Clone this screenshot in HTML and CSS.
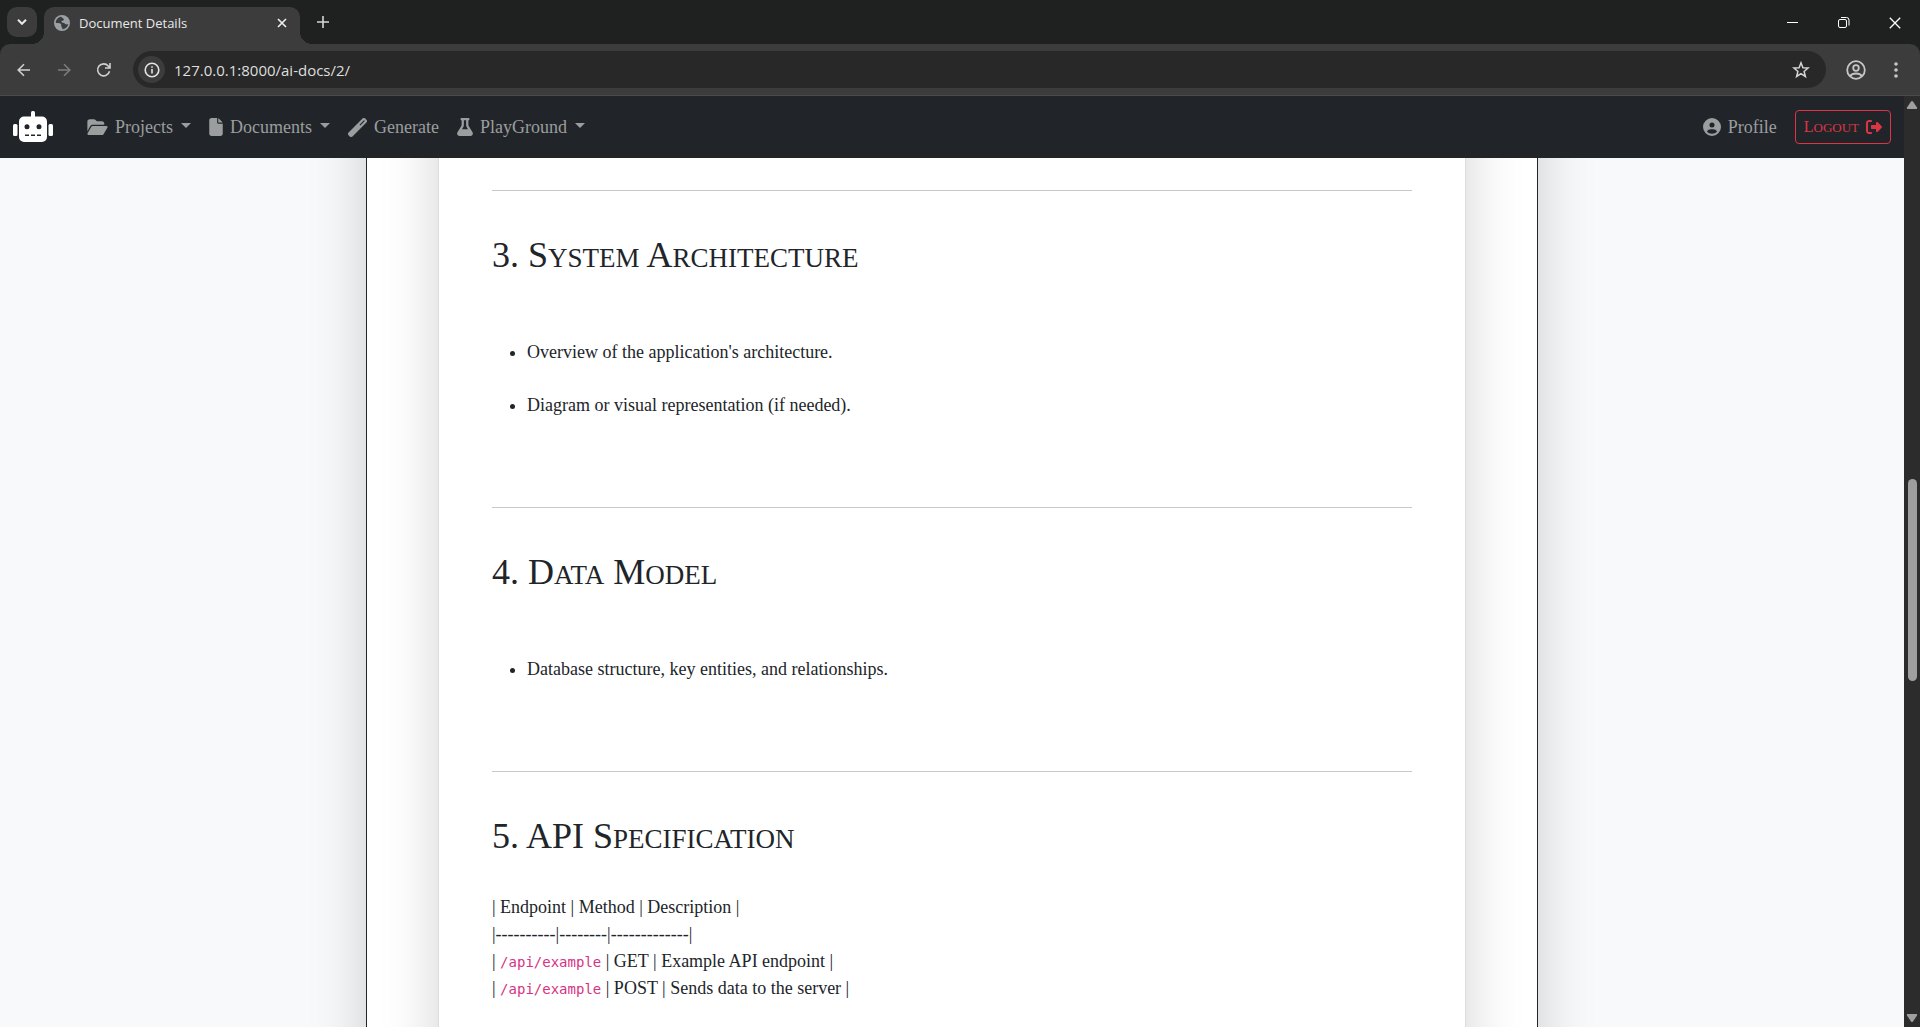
FILE: index.html
```html
<!DOCTYPE html>
<html lang="en">
<head>
<meta charset="utf-8">
<title>Document Details</title>
<link rel="stylesheet" href="styles.css">
</head>
<body>
<header class="browser">
  <div class="tabstrip">
    <button class="tab-search" aria-label="Search tabs"><svg width="10" height="6" viewBox="0 0 10 6" fill="none" stroke="#e8e8e8" stroke-width="2"><path d="M1 .8 5 4.8 9 .8"/></svg></button>
    <div class="tab">
      <svg width="16" height="16" viewBox="0 0 16 16"><circle cx="8" cy="8" r="8" fill="#9aa0a6"/><path d="M7 1.800C3.700 2.300 1.800 5 1.800 8c2 0 3.900-.2 5 .8 1.200 1.100-.3 2.400 1 3.400.8.600.7 1.400.2 2 3.300 0 5.800-2.300 6.200-5.200-1.300.7-2.500.4-3.400-.6-.9-1-2.900-.2-3.300-1.400-.4-1.300 1.500-1 2.400-1.900.7-.8-1-1.600-2.900-3.300z" fill="#3c3c3c"/></svg>
      <span class="tab-title">Document Details</span>
      <button class="plain" aria-label="Close tab"><svg width="10" height="10" viewBox="0 0 10 10" stroke="#f0f0f0" stroke-width="1.600"><path d="M1 1l8 8M9 1 1 9"/></svg></button>
    </div>
    <button class="plain new-tab" aria-label="New tab"><svg width="12" height="12" viewBox="0 0 12 12" stroke="#d5d5d5" stroke-width="1.600"><path d="M6 0v12M0 6h12"/></svg></button>
    <div class="window-controls">
      <button class="plain" aria-label="Minimize"><svg width="12" height="12" viewBox="0 0 12 12" stroke="#fff"><path d="M0 5.500h11"/></svg></button>
      <button class="plain" aria-label="Restore"><svg width="12" height="12" viewBox="0 0 12 12" fill="none" stroke="#fff"><rect x=".5" y="2.500" width="8" height="8" rx="1.500"/><path d="M3 .5h5.500a2.500 2.500 0 0 1 2.500 2.500v5.500"/></svg></button>
      <button class="plain" aria-label="Close"><svg width="12" height="12" viewBox="0 0 12 12" stroke="#fff" stroke-width="1.300"><path d="M.8.800l10.400 10.400M11.200.8.800 11.200"/></svg></button>
    </div>
  </div>
  <div class="toolbar">
    <button class="plain" aria-label="Back"><svg width="16" height="16" viewBox="0 0 16 16" fill="none" stroke="#d0d0d0" stroke-width="1.600"><path d="M14 8H2M8 2.200 2.200 8 8 13.800"/></svg></button>
    <button class="plain" aria-label="Forward"><svg width="16" height="16" viewBox="0 0 16 16" fill="none" stroke="#7c7c7c" stroke-width="1.600"><path d="M2 8h12M8 2.200 13.800 8 8 13.800"/></svg></button>
    <button class="plain" aria-label="Reload"><svg width="16" height="16" viewBox="0 0 16 16" fill="none" stroke="#d0d0d0" stroke-width="1.600"><path d="M13.500 9.300A6 6 0 1 1 12.300 4L14 5.800M14 1v5H9"/></svg></button>
    <div class="omnibox">
      <button class="plain site-info" aria-label="Site information"><svg width="16" height="16" viewBox="0 0 16 16" fill="none" stroke="#e3e3e3" stroke-width="1.600"><circle cx="8" cy="8" r="6.800"/><path d="M8 7v4.500M8 4.200v1.600"/></svg></button>
      <input class="url" type="text" aria-label="Address" value="127.0.0.1:8000/ai-docs/2/">
      <button class="plain" aria-label="Bookmark"><svg width="18" height="18" viewBox="0 0 18 18" fill="none" stroke="#d5d5d5" stroke-width="1.500"><path d="M9 1.800l1.900 4.900 5.200.3-4 3.400 1.300 5.100L9 12.700l-4.400 2.800 1.300-5.100-4-3.400 5.200-.3z"/></svg></button>
    </div>
    <button class="plain" aria-label="Account"><svg width="20" height="20" viewBox="0 0 20 20" fill="none" stroke="#c7c7c7" stroke-width="1.800"><circle cx="10" cy="10" r="8.800"/><circle cx="10" cy="8" r="2.800"/><path d="M4 16.200c2.500-3.600 9.500-3.600 12 0"/></svg></button>
    <button class="plain menu" aria-label="Menu"><svg width="4" height="16" viewBox="0 0 4 16" fill="#c7c7c7"><circle cx="2" cy="2" r="1.800"/><circle cx="2" cy="8" r="1.800"/><circle cx="2" cy="14" r="1.800"/></svg></button>
  </div>
</header>
<div class="viewport">
  <div class="page">
    <nav class="navbar">
      <a class="brand" href="#" aria-label="Home"><svg width="40" height="32" viewBox="0 0 40 32" fill="#fff"><rect y="13" width="4.500" height="12" rx="1.500"/><rect x="35.500" y="13" width="4.500" height="12" rx="1.500"/><rect x="18" width="4" height="9" rx="1.500"/><path fill-rule="evenodd" d="M11 5.500h18a5 5 0 0 1 5 5V26a5 5 0 0 1-5 5H11a5 5 0 0 1-5-5V10.500a5 5 0 0 1 5-5zM14 13.300a2.500 2.500 0 1 0 0 5 2.500 2.500 0 0 0 0-5zm12 0a2.500 2.500 0 1 0 0 5 2.500 2.500 0 0 0 0-5zM12 23.500V25h4v-1.500zm6 0V25h4v-1.500zm6 0V25h4v-1.500z"/></svg></a>
      <a class="nav-link" href="#"><svg width="21" height="18" viewBox="0 0 576 512"><path d="M88.700 223.800L0 375.800V96C0 60.700 28.700 32 64 32H181.500c17 0 33.300 6.700 45.300 18.700l26.500 26.500c12 12 28.300 18.700 45.300 18.700H416c35.300 0 64 28.700 64 64v32H144c-22.800 0-43.800 12.100-55.300 31.800zm27.600 16.100C122.100 230 132.600 224 144 224H544c11.500 0 22 6.100 27.700 16.100s5.700 22.200-.1 32.100l-112 192C453.900 474 443.400 480 432 480H32c-11.500 0-22-6.100-27.700-16.100s-5.700-22.200 .1-32.100l112-192z"/></svg>Projects<span class="caret"></span></a>
      <a class="nav-link" href="#"><svg width="14" height="18" viewBox="0 0 384 512"><path d="M0 64C0 28.700 28.700 0 64 0H224V128c0 17.700 14.300 32 32 32H384V448c0 35.300-28.700 64-64 64H64c-35.300 0-64-28.700-64-64V64zm384 64H256V0L384 128z"/></svg>Documents<span class="caret"></span></a>
      <a class="nav-link" href="#"><svg width="19" height="19" viewBox="0 0 19 19"><path fill-rule="evenodd" d="M14.500.6a2 2 0 0 1 2.800 0l1.100 1.100a2 2 0 0 1 0 2.800L4.500 18.400a2 2 0 0 1-2.800 0L.6 17.300a2 2 0 0 1 0-2.800zM16 2.300 11.500 6.800l.8.800 4.500-4.500z"/></svg>Generate</a>
      <a class="nav-link" href="#"><svg width="16" height="18" viewBox="0 0 448 512"><path d="M288 0H160 128C110.300 0 96 14.300 96 32s14.300 32 32 32V196.800c0 11.800-3.300 23.500-9.500 33.500L10.300 406.200C3.600 417.200 0 429.700 0 442.600C0 480.900 31.100 512 69.400 512H378.600c38.300 0 69.400-31.100 69.400-69.400c0-12.800-3.600-25.400-10.300-36.400L329.500 230.400c-6.200-10.100-9.500-21.700-9.500-33.500V64c17.700 0 32-14.300 32-32s-14.300-32-32-32H288zM192 196.800V64h64V196.800c0 23.700 6.600 46.900 19 67.100L309.500 320h-171L173 263.900c12.400-20.200 19-43.400 19-67.100z"/></svg>PlayGround<span class="caret"></span></a>
      <a class="nav-link profile" href="#"><svg width="18" height="18" viewBox="0 0 512 512"><path d="M399 384.200C376.900 345.800 335.400 320 288 320H224c-47.400 0-88.900 25.800-111 64.200c35.200 39.200 86.200 63.800 143 63.800s107.800-24.700 143-63.800zM0 256a256 256 0 1 1 512 0A256 256 0 1 1 0 256zm256 16a72 72 0 1 0 0-144 72 72 0 1 0 0 144z"/></svg>Profile</a>
      <button class="logout"><span>L<span class="caps">ogout</span></span><svg width="16" height="16" viewBox="0 0 512 512"><path d="M377.900 105.900L500.700 228.700c7.200 7.200 11.300 17.100 11.300 27.300s-4.100 20.100-11.300 27.300L377.900 406.100c-6.400 6.400-15 9.900-24 9.900c-18.700 0-33.900-15.200-33.900-33.900l0-62.100-128 0c-17.700 0-32-14.300-32-32l0-64c0-17.700 14.300-32 32-32l128 0 0-62.100c0-18.700 15.200-33.900 33.900-33.900c9 0 17.600 3.600 24 9.900zM160 96L96 96c-17.700 0-32 14.300-32 32l0 256c0 17.700 14.300 32 32 32l64 0c17.700 0 32 14.300 32 32s-14.300 32-32 32l-64 0c-53 0-96-43-96-96L0 128C0 75 43 32 96 32l64 0c17.700 0 32 14.300 32 32s-14.300 32-32 32z"/></svg></button>
    </nav>
    <main class="content">
      <div class="outer-card">
        <article class="document">
          <hr>
          <h2>3. S<span class="caps">ystem</span> A<span class="caps">rchitecture</span></h2>
          <ul>
            <li>Overview of the application's architecture.</li>
            <li>Diagram or visual representation (if needed).</li>
          </ul>
          <hr>
          <h2>4. D<span class="caps">ata</span> M<span class="caps">odel</span></h2>
          <ul>
            <li>Database structure, key entities, and relationships.</li>
          </ul>
          <hr>
          <h2>5. API S<span class="caps">pecification</span></h2>
          <p>| Endpoint | Method | Description |<br>
          |----------|--------|-------------|<br>
          | <code>/api/example</code> | GET | Example API endpoint |<br>
          | <code>/api/example</code> | POST | Sends data to the server |</p>
        </article>
      </div>
    </main>
  </div>
  <div class="scrollbar">
    <svg width="12" height="8" viewBox="0 0 12 8" fill="#9f9f9f"><path d="M5 .6a1.300 1.300 0 0 1 2 0l4 5.800c.4.800 0 1.600-.9 1.600H1.900C1 8 .6 7.200 1 6.400z"/></svg>
    <div class="track"><div class="thumb"></div></div>
    <svg width="12" height="8" viewBox="0 0 12 8" fill="#9f9f9f"><path d="M5 7.400a1.300 1.300 0 0 0 2 0l4-5.800C11.400.8 11 0 10.100 0H1.900C1 0 .6.800 1 1.600z"/></svg>
  </div>
</div>
</body>
</html>
```

FILE: styles.css
```css
* { box-sizing: border-box; }

body {
  margin: 0;
  height: 100vh;
  display: flex;
  flex-direction: column;
  overflow: hidden;
  font: 18px/27px "Liberation Serif", "Times New Roman", serif;
  color: #212529;
}

svg { display: block; flex: none; }

.plain {
  display: flex;
  align-items: center;
  justify-content: center;
  padding: 0;
  border: 0;
  background: none;
}

/* browser window */
.browser {
  flex: none;
  background: #1f2120;
  font-family: "Open Sans", "Noto Sans", sans-serif;
}

.tabstrip {
  display: flex;
  align-items: flex-end;
  height: 44px;
  padding-left: 7px;
}

.tab-search {
  display: flex;
  align-items: center;
  justify-content: center;
  width: 30px;
  height: 30px;
  margin: 0 7px 7px 0;
  border: 0;
  border-radius: 10px;
  background: #3c3c3c;
}

.tab {
  position: relative;
  display: flex;
  align-items: center;
  gap: 9px;
  width: 256px;
  height: 37px;
  padding: 0 13px 6px 10px;
  border-radius: 10px 10px 0 0;
  background: #3c3c3c;
}

.tab::before,
.tab::after {
  content: "";
  position: absolute;
  bottom: 0;
  width: 12px;
  height: 12px;
}

.tab::before {
  right: 100%;
  background: radial-gradient(circle at 0 0, transparent 12px, #3c3c3c 12px);
}

.tab::after {
  left: 100%;
  background: radial-gradient(circle at 100% 0, transparent 12px, #3c3c3c 12px);
}

.tab-title {
  flex: 1;
  font-size: 13px;
  line-height: 18px;
  color: #e8e8e8;
}

.new-tab { margin: 0 0 16px 17px; }

.window-controls {
  display: flex;
  gap: 39px;
  margin: 0 19px 15px auto;
}

.toolbar {
  display: flex;
  align-items: center;
  gap: 24px;
  height: 52px;
  padding: 0 22px 0 16px;
  border-bottom: 1px solid #4a4b4c;
  border-radius: 10px 10px 0 0;
  background: #3c3c3c;
}

.menu { margin-left: 4px; }

.omnibox {
  flex: 1;
  display: flex;
  align-items: center;
  gap: 9px;
  height: 37px;
  margin: 0 -4px 0 -3px;
  padding: 0 16px 0 5px;
  border-radius: 19px;
  background: #282828;
}

.site-info {
  width: 27px;
  height: 27px;
  border-radius: 50%;
  background: #3c3c3c;
}

.url {
  flex: 1;
  padding: 0;
  border: 0;
  outline: 0;
  background: none;
  font: 15px/20px "Open Sans", "Noto Sans", sans-serif;
  color: #dedede;
}

/* page */
.viewport {
  flex: 1;
  display: flex;
  min-height: 0;
}

.page {
  flex: 1;
  display: flex;
  flex-direction: column;
  min-width: 0;
}

.navbar {
  flex: none;
  display: flex;
  align-items: center;
  gap: 18px;
  height: 62px;
  padding: 0 13px;
  background: #212529;
}

.brand { margin-right: 16px; }

.nav-link {
  display: flex;
  align-items: center;
  gap: 7px;
  color: #9b9d9f;
  text-decoration: none;
}

.nav-link svg,
.logout svg { fill: currentColor; }

.caret {
  margin: -4px 0 0 1px;
  border: 5px solid transparent;
  border-top-color: currentColor;
  border-bottom: 0;
}

.profile { margin-left: auto; }

/* small capitals, three quarters of the capital size */
.caps {
  line-height: 1;
  text-transform: uppercase;
}

.logout {
  display: flex;
  align-items: center;
  gap: 7px;
  height: 34px;
  padding: 0 8px;
  border: 1px solid #dc3545;
  border-radius: 4px;
  background: none;
  font: 16px/24px "Liberation Serif", "Times New Roman", serif;
  color: #dc3545;
}

.logout .caps { font-size: 13px; }

.content {
  flex: 1;
  min-height: 0;
  overflow: hidden;
  padding: 0 366px;
  background: #f8f9fa;
}

.outer-card {
  margin-top: -120px;
  padding: 0 71px;
  border: solid #212529;
  border-width: 0 1px;
  background: #fff;
  box-shadow: 0 18px 54px rgba(0, 0, 0, .175);
}

.document {
  padding: 152px 53px 144px;
  border: solid #dcdddf;
  border-width: 0 1px;
  background: #fff;
  box-shadow: 0 18px 54px rgba(0, 0, 0, .175);
}

hr {
  height: 1px;
  margin: 0;
  border: 0;
  background: #c7c8c9;
}

h2 {
  margin: 43px 0 36px;
  font-size: 36px;
  line-height: 43px;
  font-weight: 400;
}

h2 .caps { font-size: 27px; }

ul {
  margin: 0 0 61px;
  padding: 0 0 0 35px;
}

li { padding-top: 26px; }
li:last-child { padding-bottom: 27px; }

p { margin: 0; }

code {
  font: 14px "DejaVu Sans Mono", monospace;
  color: #d63384;
}

.scrollbar {
  flex: none;
  display: flex;
  flex-direction: column;
  align-items: center;
  gap: 4px;
  width: 16px;
  padding: 5px 0;
  background: #2c2c2c;
}

.track {
  flex: 1;
  display: grid;
  grid-template-rows: 366fr 202fr 329fr;
}

.thumb {
  grid-row: 2;
  width: 9px;
  border-radius: 5px;
  background: #9f9f9f;
}
```
